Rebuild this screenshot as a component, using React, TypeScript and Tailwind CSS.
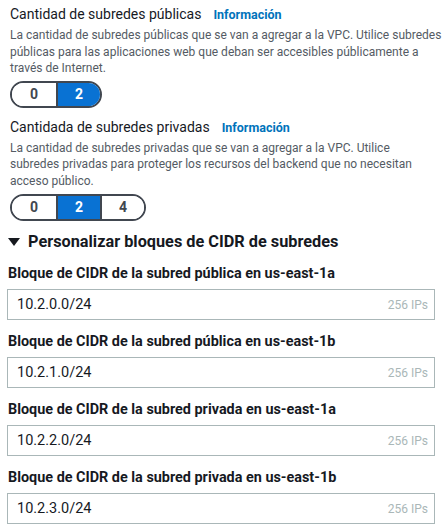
import React from "react";

const font = { fontFamily: "Roboto, 'Liberation Sans', sans-serif" };

function Segmented({ options, selected }: { options: string[]; selected: string }) {
    return (
        <div className="flex w-fit h-[27px] rounded-full border-2 border-[#414750] overflow-hidden">
            {options.map((o, i) => (
                <div
                    key={o}
                    className={`w-[44px] flex items-center justify-center text-[14px] font-bold ${
                        o === selected ? "bg-[#0972d3] text-white" : "bg-white text-[#414750]"
                    } ${i > 0 ? "border-l-2 border-[#414750]" : ""}`}
                >
                    {o}
                </div>
            ))}
        </div>
    );
}

function Field({ label, value }: { label: string; value: string }) {
    return (
        <div className="mb-[12px]">
            <div className="text-[14.4px] font-bold text-[#16191f] leading-[20px] h-[20px] pl-[8px]">{label}</div>
            <div className="mt-[5px] ml-[7px] w-[428px] h-[31px] border border-[#aab7b8] flex items-center justify-between pl-[9px] pr-[6px]">
                <span className="text-[14.5px] text-[#16191f]">{value}</span>
                <span className="text-[12px] text-[#aab7b8]">256 IPs</span>
            </div>
        </div>
    );
}

export default function App() {
    return (
        <main className="bg-white w-[448px] h-[530px] overflow-hidden" style={font}>
            {/* Public subnets */}
            <section className="pl-[10px] pt-[4px]">
                <div className="flex items-baseline gap-[12px] h-[20px]">
                    <span className="text-[14px] text-[#16191f]">Cantidad de subredes públicas</span>
                    <span className="text-[12.5px] font-bold text-[#0073bb]">Información</span>
                </div>
                <p className="mt-[3px] text-[12px] leading-[16.5px] text-[#545b64]">
                    La cantidad de subredes públicas que se van a agregar a la VPC. Utilice subredes públicas para las aplicaciones web que deban ser accesibles públicamente a través de Internet.
                </p>
                <div className="mt-[4px]">
                    <Segmented options={["0", "2"]} selected="2" />
                </div>
            </section>

            {/* Private subnets */}
            <section className="pl-[10px] pt-[9px]">
                <div className="flex items-baseline gap-[12px] h-[20px]">
                    <span className="text-[14px] text-[#16191f]">Cantidada de subredes privadas</span>
                    <span className="text-[12.5px] font-bold text-[#0073bb]">Información</span>
                </div>
                <p className="mt-[3px] text-[12px] leading-[16.5px] text-[#545b64] pr-[20px]">
                    La cantidad de subredes privadas que se van a agregar a la VPC. Utilice subredes privadas para proteger los recursos del backend que no necesitan acceso público.
                </p>
                <div className="mt-[5px]">
                    <Segmented options={["0", "2", "4"]} selected="2" />
                </div>
            </section>

            {/* CIDR customization */}
            <section className="pt-[9px]">
                <div className="flex items-center gap-[8px] pl-[8px] h-[24px]">
                    <svg width="12" height="10" viewBox="0 0 12 10">
                        <path d="M0 1 L12 1 L6 9 Z" fill="#16191f" />
                    </svg>
                    <span className="text-[16.3px] font-bold text-[#16191f]">Personalizar bloques de CIDR de subredes</span>
                </div>
                <div className="mt-[10px]">
                    <Field label="Bloque de CIDR de la subred pública en us-east-1a" value="10.2.0.0/24" />
                    <Field label="Bloque de CIDR de la subred pública en us-east-1b" value="10.2.1.0/24" />
                    <Field label="Bloque de CIDR de la subred privada en us-east-1a" value="10.2.2.0/24" />
                    <Field label="Bloque de CIDR de la subred privada en us-east-1b" value="10.2.3.0/24" />
                </div>
            </section>
        </main>
    );
}
